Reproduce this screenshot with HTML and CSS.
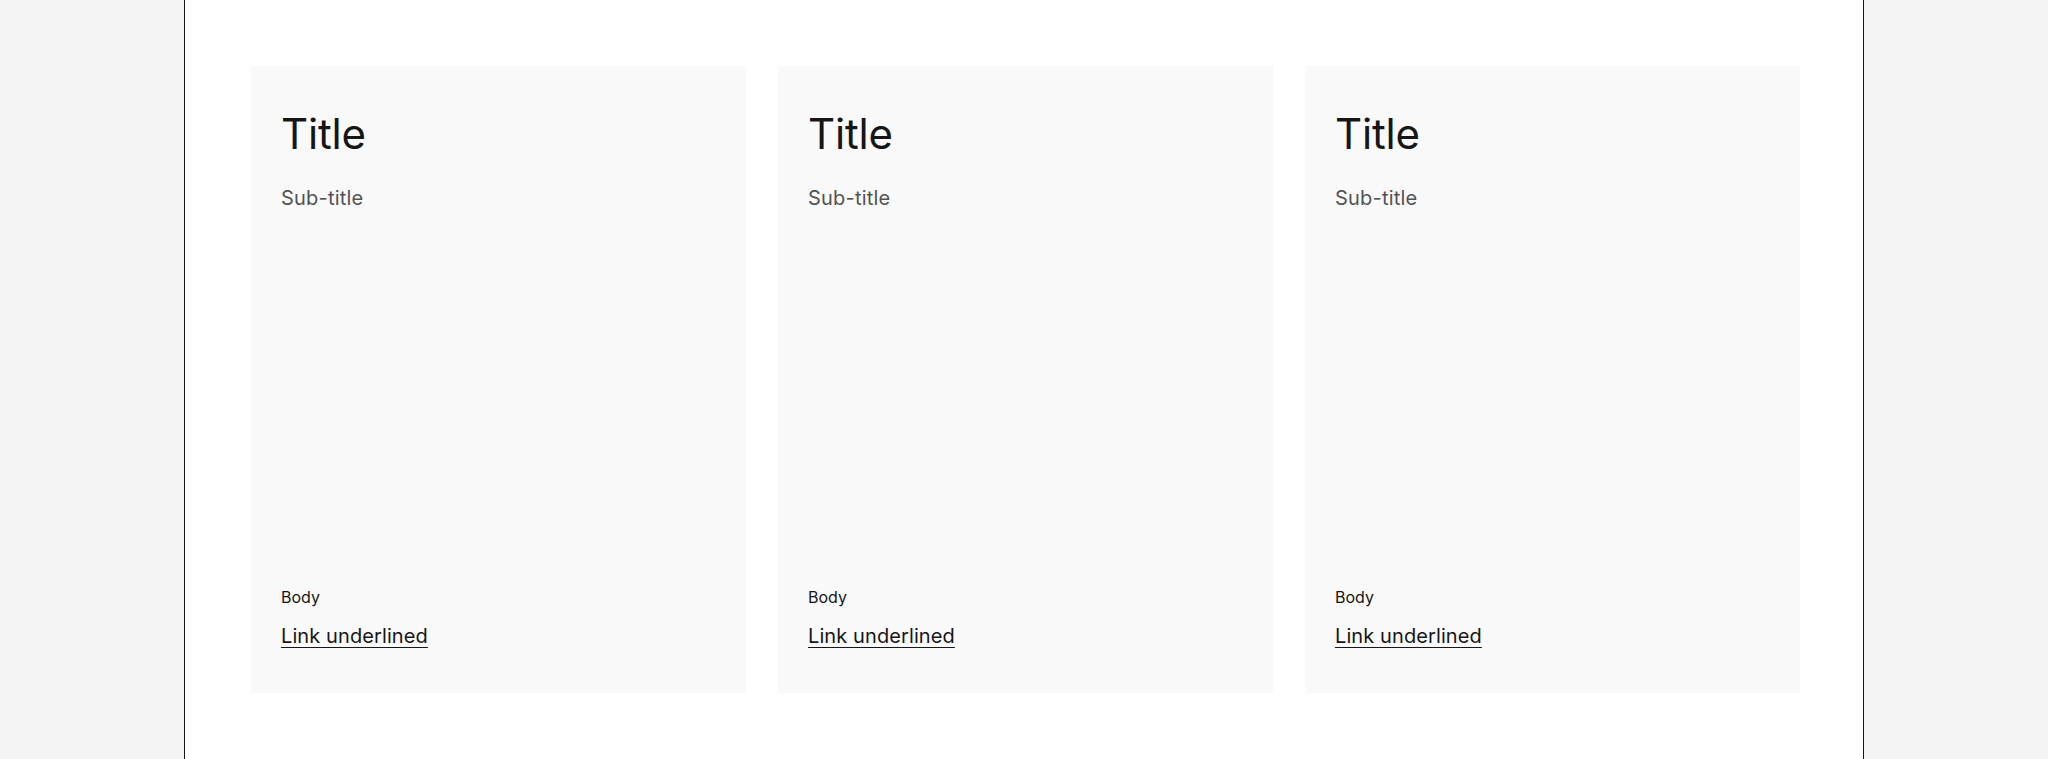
FILE: index.html
```html
<!DOCTYPE html>
<html lang="en">
<head>
  <meta charset="UTF-8" />
  <meta name="viewport" content="width=device-width, initial-scale=1.0" />
  <title>Cards</title>
  <link rel="stylesheet" href="styles.css">
</head>
<body>
  <div class="frame">
    <div class="card-grid">
      <!-- Card 1 -->
      <div class="card">
        <div class="card-head">
          <h2 class="card-title">Title</h2>
          <p class="card-subtitle">Sub-title</p>
        </div>
        <div class="card-foot">
          <p class="card-body">Body</p>
          <p class="card-link-row"><a href="#" class="card-link">Link underlined</a></p>
        </div>
      </div>

      <!-- Card 2 -->
      <div class="card">
        <div class="card-head">
          <h2 class="card-title">Title</h2>
          <p class="card-subtitle">Sub-title</p>
        </div>
        <div class="card-foot">
          <p class="card-body">Body</p>
          <p class="card-link-row"><a href="#" class="card-link">Link underlined</a></p>
        </div>
      </div>

      <!-- Card 3 -->
      <div class="card">
        <div class="card-head">
          <h2 class="card-title">Title</h2>
          <p class="card-subtitle">Sub-title</p>
        </div>
        <div class="card-foot">
          <p class="card-body">Body</p>
          <p class="card-link-row"><a href="#" class="card-link">Link underlined</a></p>
        </div>
      </div>
    </div>
  </div>
</body>
</html>
```

FILE: styles.css
```css
body {
  font-family: 'Inter', 'Liberation Sans', sans-serif;
  background-color: #f4f4f4;
  margin: 0;
  padding: 0;
  color: #161616;
}

.frame {
  width: 1680px;
  min-height: 100vh;
  margin: 0 auto;
  box-sizing: border-box;
  background-color: #fff;
  border-left: 1px solid #161616;
  border-right: 1px solid #161616;
  padding: 66px 63px 0 66px;
}

.card-grid {
  display: grid;
  grid-template-columns: repeat(3, 1fr);
  gap: 32px;
}

.card {
  background-color: #f9f9f9;
  height: 627px;
  box-sizing: border-box;
  padding: 42px 30px 43px;
  display: flex;
  flex-direction: column;
  justify-content: space-between;
}

.card-title {
  font-size: 42px;
  line-height: 52px;
  font-weight: 400;
  margin: 0;
  letter-spacing: -0.2px;
}

.card-subtitle {
  font-size: 20px;
  line-height: 28px;
  color: #525252;
  margin: 24px 0 0;
  letter-spacing: 0.2px;
}

.card-body {
  font-size: 16px;
  line-height: 24px;
  margin: 0;
}

.card-link-row {
  font-size: 20px;
  line-height: 28px;
  margin: 13px 0 0;
}

.card-link {
  color: #161616;
  text-decoration: underline;
  text-decoration-thickness: 1px;
  text-underline-offset: 4px;
  letter-spacing: 0.1px;
}
```
